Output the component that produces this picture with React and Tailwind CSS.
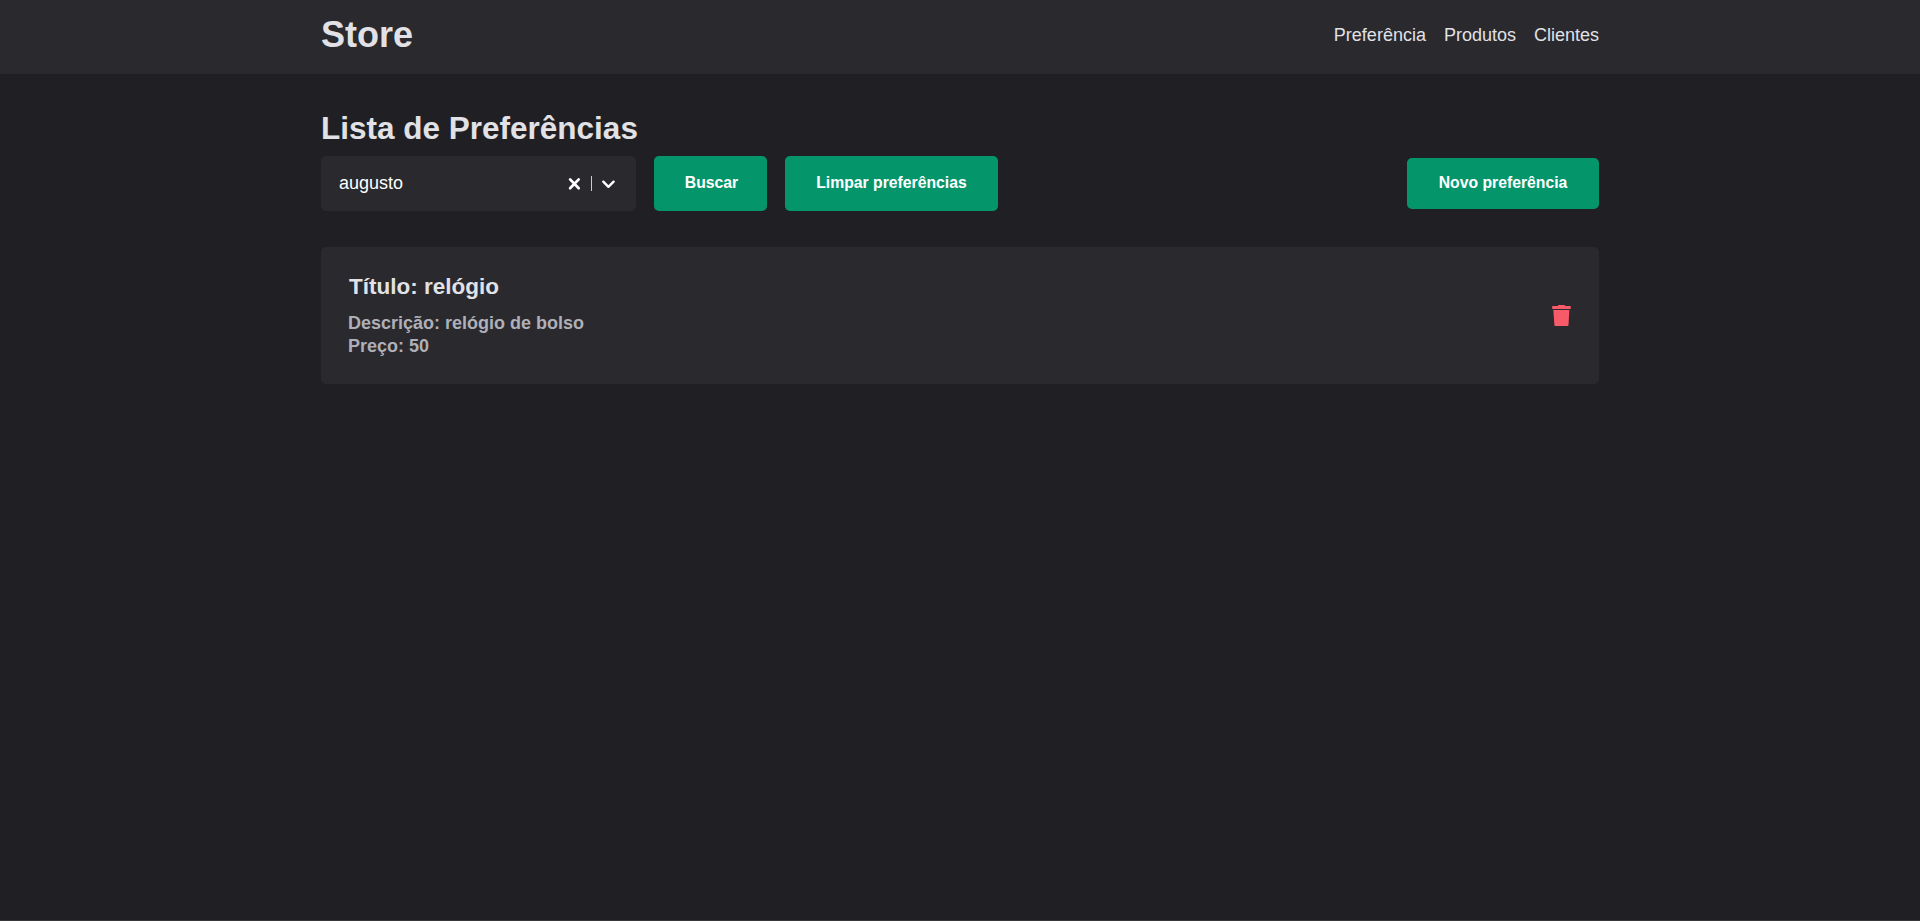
const buttonClass = "rounded-[5px] bg-[#04966a] text-[15.75px] leading-[18px] font-bold text-white";

function ClearIcon() {
  return (
    <svg width="20" height="20" viewBox="0 0 20 20" fill="none" stroke="white" strokeWidth="2.7" strokeLinecap="round">
      <path d="M6.1 5.4l8.6 8.9M14.7 5.4l-8.6 8.9" />
    </svg>
  );
}

function ChevronIcon() {
  return (
    <svg width="20" height="20" viewBox="0 0 20 20" fill="none" stroke="white" strokeWidth="2.4" strokeLinecap="round" strokeLinejoin="round">
      <path d="M5.3 7.7l5.1 5.1 5.2-5.1" />
    </svg>
  );
}

function TrashIcon() {
  return (
    <svg width="19" height="21" viewBox="0 0 19 21" fill="#f75a68">
      <path d="M6.6 0h5.8l.9 1.1h4.9c.4 0 .6.2.6.6v1.6c0 .4-.2.6-.6.6H.7c-.4 0-.6-.2-.6-.6V1.7c0-.4.2-.6.6-.6h5z" />
      <path d="M1.3 5h16.1l-.9 15c0 .6-.5 1-1.1 1H3.5c-.6 0-1.1-.4-1.1-1z" />
    </svg>
  );
}

export default function App() {
  return (
    <div className="flex h-[921px] flex-col border-b border-[#38383b] bg-[#202024] font-['Liberation_Sans',Arial,sans-serif] text-[18px] text-[#e1e1e6]">
      <header className="h-[74px] shrink-0 bg-[#29292e]">
        <div className="mx-auto flex h-[70px] w-[1278px] items-center justify-between">
          <span className="text-[36px] leading-[42px] font-bold">Store</span>
          <nav className="flex gap-[18px] leading-[20px]">
            <a>Preferência</a>
            <a>Produtos</a>
            <a>Clientes</a>
          </nav>
        </div>
      </header>

      <main className="mx-auto w-[1278px] pt-[36px]">
        <h1 className="h-[46px] text-[31.5px] leading-[36px] font-bold">Lista de Preferências</h1>
        <div className="flex items-center justify-between">
          <div className="flex gap-[18px]">
            <div className="flex h-[55px] w-[315px] items-center justify-between rounded-[5px] bg-[#29292e] px-[18px] text-white">
              <span>augusto</span>
              <div className="flex items-center">
                <ClearIcon />
                <span className="mr-[6px] ml-[7px] h-[15px] w-px bg-[#cccccc]" />
                <ChevronIcon />
              </div>
            </div>
            <button className={`${buttonClass} h-[55px] w-[113px] pb-[1px] pl-[2px]`}>Buscar</button>
            <button className={`${buttonClass} h-[55px] w-[213px] pb-[1px]`}>Limpar preferências</button>
          </div>
          <button className={`${buttonClass} h-[51px] w-[192px] pb-[1px]`}>Novo preferência</button>
        </div>

        <article className="mt-[36px] flex h-[137px] items-center justify-between rounded-[5px] bg-[#29292e] pr-[28px] pl-[27px]">
          <div className="font-bold">
            <h2 className="pl-px text-[22.5px] leading-[26px]">Título: relógio</h2>
            <p className="mt-[12px] leading-[23px] text-[#afafb8]">Descrição: relógio de bolso</p>
            <p className="leading-[23px] text-[#afafb8]">Preço: 50</p>
          </div>
          <button aria-label="Excluir">
            <TrashIcon />
          </button>
        </article>
      </main>
    </div>
  );
}
